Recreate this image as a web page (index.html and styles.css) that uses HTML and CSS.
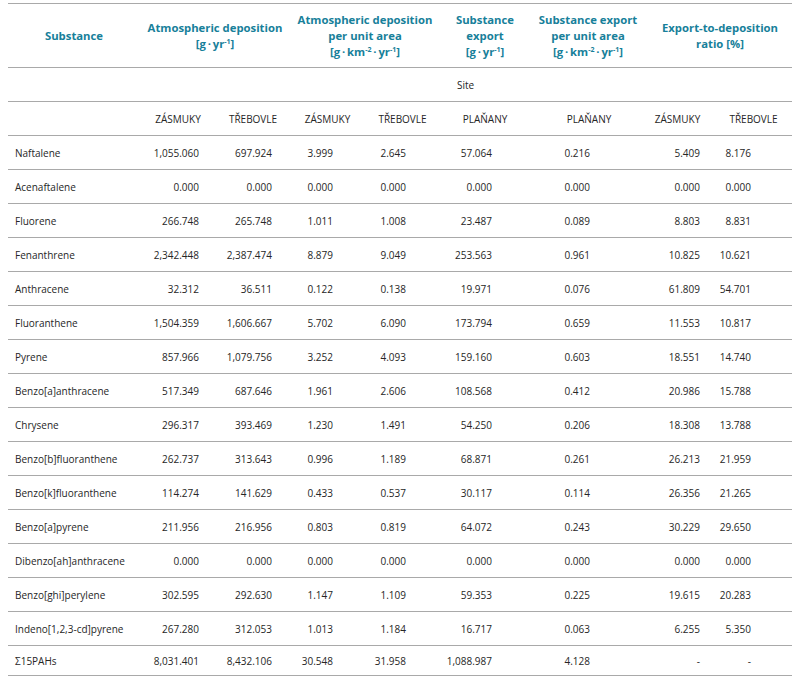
FILE: index.html
```html
<!DOCTYPE html>
<html lang="en">
<head>
<meta charset="utf-8">
<title>PAH deposition and export</title>
<link rel="stylesheet" href="styles.css">
</head>
<body>
<table class="data">
  <colgroup>
    <col class="c0"><col class="c1"><col class="c2"><col class="c3"><col class="c4"><col class="c5"><col class="c6"><col class="c7"><col class="c8">
  </colgroup>
  <thead>
    <tr class="head">
      <th>Substance</th>
      <th colspan="2">Atmospheric deposition<br>[g&#8201;·&#8201;yr<sup>-1</sup>]</th>
      <th colspan="2">Atmospheric deposition<br>per unit area<br>[g&#8201;·&#8201;km<sup>-2</sup>&#8201;·&#8201;yr<sup>-1</sup>]</th>
      <th>Substance<br>export<br>[g&#8201;·&#8201;yr<sup>-1</sup>]</th>
      <th class="exp">Substance export<br>per unit area<br>[g&#8201;·&#8201;km<sup>-2</sup>&#8201;·&#8201;yr<sup>-1</sup>]</th>
      <th colspan="2" class="ratio">Export-to-deposition<br>ratio [%]</th>
    </tr>
    <tr class="site">
      <td></td>
      <td colspan="8">Site</td>
    </tr>
    <tr class="sites">
      <td></td>
      <td>ZÁSMUKY</td><td>TŘEBOVLE</td><td>ZÁSMUKY</td><td>TŘEBOVLE</td><td>PLAŇANY</td><td class="p6">PLAŇANY</td><td>ZÁSMUKY</td><td>TŘEBOVLE</td>
    </tr>
  </thead>
  <tbody>
    <tr><td>Naftalene</td><td>1,055.060</td><td>697.924</td><td>3.999</td><td>2.645</td><td>57.064</td><td>0.216</td><td>5.409</td><td>8.176</td></tr>
    <tr><td>Acenaftalene</td><td>0.000</td><td>0.000</td><td>0.000</td><td>0.000</td><td>0.000</td><td>0.000</td><td>0.000</td><td>0.000</td></tr>
    <tr><td>Fluorene</td><td>266.748</td><td>265.748</td><td>1.011</td><td>1.008</td><td>23.487</td><td>0.089</td><td>8.803</td><td>8.831</td></tr>
    <tr><td>Fenanthrene</td><td>2,342.448</td><td>2,387.474</td><td>8.879</td><td>9.049</td><td>253.563</td><td>0.961</td><td>10.825</td><td>10.621</td></tr>
    <tr><td>Anthracene</td><td>32.312</td><td>36.511</td><td>0.122</td><td>0.138</td><td>19.971</td><td>0.076</td><td>61.809</td><td>54.701</td></tr>
    <tr><td>Fluoranthene</td><td>1,504.359</td><td>1,606.667</td><td>5.702</td><td>6.090</td><td>173.794</td><td>0.659</td><td>11.553</td><td>10.817</td></tr>
    <tr><td>Pyrene</td><td>857.966</td><td>1,079.756</td><td>3.252</td><td>4.093</td><td>159.160</td><td>0.603</td><td>18.551</td><td>14.740</td></tr>
    <tr><td>Benzo[a]anthracene</td><td>517.349</td><td>687.646</td><td>1.961</td><td>2.606</td><td>108.568</td><td>0.412</td><td>20.986</td><td>15.788</td></tr>
    <tr><td>Chrysene</td><td>296.317</td><td>393.469</td><td>1.230</td><td>1.491</td><td>54.250</td><td>0.206</td><td>18.308</td><td>13.788</td></tr>
    <tr><td>Benzo[b]fluoranthene</td><td>262.737</td><td>313.643</td><td>0.996</td><td>1.189</td><td>68.871</td><td>0.261</td><td>26.213</td><td>21.959</td></tr>
    <tr><td>Benzo[k]fluoranthene</td><td>114.274</td><td>141.629</td><td>0.433</td><td>0.537</td><td>30.117</td><td>0.114</td><td>26.356</td><td>21.265</td></tr>
    <tr><td>Benzo[a]pyrene</td><td>211.956</td><td>216.956</td><td>0.803</td><td>0.819</td><td>64.072</td><td>0.243</td><td>30.229</td><td>29.650</td></tr>
    <tr><td>Dibenzo[ah]anthracene</td><td>0.000</td><td>0.000</td><td>0.000</td><td>0.000</td><td>0.000</td><td>0.000</td><td>0.000</td><td>0.000</td></tr>
    <tr><td>Benzo[ghi]perylene</td><td>302.595</td><td>292.630</td><td>1.147</td><td>1.109</td><td>59.353</td><td>0.225</td><td>19.615</td><td>20.283</td></tr>
    <tr><td>Indeno[1,2,3-cd]pyrene</td><td>267.280</td><td>312.053</td><td>1.013</td><td>1.184</td><td>16.717</td><td>0.063</td><td>6.255</td><td>5.350</td></tr>
    <tr class="total"><td>Σ15PAHs</td><td>8,031.401</td><td>8,432.106</td><td>30.548</td><td>31.958</td><td>1,088.987</td><td>4.128</td><td>-</td><td>-</td></tr>
  </tbody>
</table>
</body>
</html>
```

FILE: styles.css
```css
html, body {
  background: #ffffff;
}
body {
  margin: 3px 8px 0 8px;
  font-family: "Open Sans", "Noto Sans", "Liberation Sans", sans-serif;
  color: #262626;
}
.data {
  width: 784px;
  border-collapse: collapse;
  table-layout: fixed;
  font-size: 10px;
}
.c0 { width: 132px; }
.c1 { width: 76px; }
.c2 { width: 74px; }
.c3 { width: 75px; }
.c4 { width: 75px; }
.c5 { width: 90px; }
.c6 { width: 110px; }
.c7 { width: 75px; }
.c8 { width: 77px; }

.data tr {
  border-top: 1px solid #a9a9a9;
  border-bottom: 1px solid #a9a9a9;
}
.data th,
.data td {
  padding: 0;
  height: 33px;
  vertical-align: middle;
}
.head th {
  height: 63px;
  color: #17809a;
  font-weight: 700;
  font-size: 11.3px;
  line-height: 16px;
  text-align: center;
}
.head th.exp {
  padding-left: 6px;
}
.head th.ratio {
  padding-left: 8px;
}
.head sup {
  font-size: 7px;
  line-height: 0;
  vertical-align: 4px;
}
.site td {
  text-align: center;
}
.site td:nth-child(2) {
  text-align: left;
  padding-left: 317px;
}
.sites td {
  text-align: center;
}
.sites td.p6 {
  padding-left: 8px;
}
tbody td {
  text-align: right;
}
tbody tr.total td {
  height: 29px;
}
tbody td:nth-child(1) { text-align: left; padding-left: 7px; }
tbody td:nth-child(2) { padding-right: 17px; }
tbody td:nth-child(3) { padding-right: 18px; }
tbody td:nth-child(4) { padding-right: 32px; }
tbody td:nth-child(5) { padding-right: 34px; }
tbody td:nth-child(6) { padding-right: 38px; }
tbody td:nth-child(7) { padding-right: 50px; }
tbody td:nth-child(8) { padding-right: 15px; }
tbody td:nth-child(9) { padding-right: 41px; }
```
